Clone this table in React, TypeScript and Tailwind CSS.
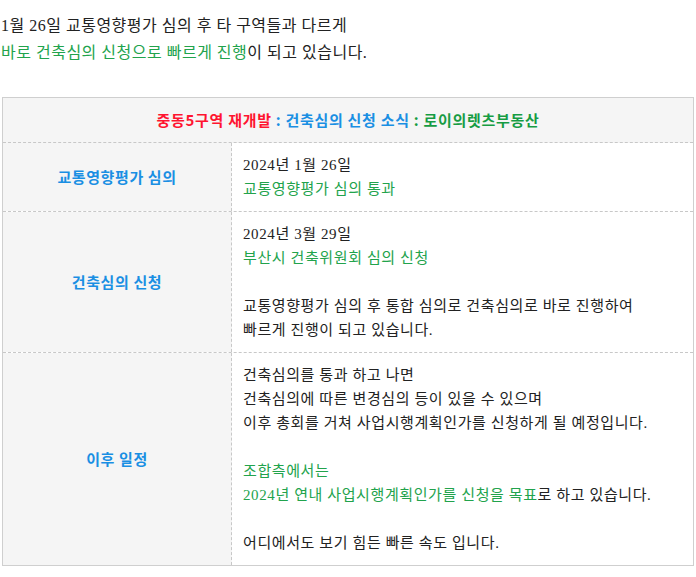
import React from "react";

const body = "font-['Liberation_Serif','Noto_Sans_CJK_KR',serif]";
const sans = "font-['Noto_Sans_CJK_KR','Noto_Sans',sans-serif]";

const rows = [
  {
    label: "교통영향평가 심의",
    lines: [
      { text: "2024년 1월 26일" },
      { text: "교통영향평가 심의 통과", green: true },
    ],
  },
  {
    label: "건축심의 신청",
    lines: [
      { text: "2024년 3월 29일" },
      { text: "부산시 건축위원회 심의 신청", green: true },
      { text: "" },
      { text: "교통영향평가 심의 후 통합 심의로 건축심의로 바로 진행하여" },
      { text: "빠르게 진행이 되고 있습니다." },
    ],
  },
];

function Line({ text, green }: { text: string; green?: boolean }) {
  return (
    <div className={`h-6 whitespace-nowrap ${green ? "text-[#22a34c]" : "text-[#222]"}`}>{text}</div>
  );
}

export default function App() {
  return (
    <div className={`bg-white w-[696px] min-h-[577px] pt-3 ${body}`}>
      {/* 소개 문구 */}
      <div className="leading-[27px] text-[16px] tracking-[0.5px] text-[#222] pl-px">
        <p>1월 26일 교통영향평가 심의 후 타 구역들과 다르게</p>
        <p>
          <span className="text-[#22a34c]">바로 건축심의 신청으로 빠르게 진행</span>이 되고 있습니다.
        </p>
      </div>

      {/* 표 */}
      <div className="mt-[31px] mx-[2px] border border-[#cfcfcf] text-[15px] tracking-[0.6px]">
        <div
          className={`h-[45px] flex items-center justify-center bg-[#f5f5f5] border-b border-dashed border-[#c8c8c8] font-bold tracking-[0.7px] ${sans}`}
        >
          <span className="text-[#ff1430]">중동5구역 재개발</span>
          <span className="text-[#1a8fe3]">&nbsp;: 건축심의 신청 소식&nbsp;</span>
          <span className="text-[#169c43]">: 로이의렛츠부동산</span>
        </div>

        {rows.map((r) => (
          <div key={r.label} className="grid grid-cols-[229px_1fr] border-b border-dashed border-[#c8c8c8]">
            <div
              className={`bg-[#f5f5f5] border-r border-dashed border-[#c8c8c8] flex items-center justify-center font-bold text-[#1a8fe3] ${sans}`}
            >
              {r.label}
            </div>
            <div className="py-[10px] pl-[11px] leading-6">
              {r.lines.map((l, i) => (
                <Line key={i} text={l.text} green={l.green} />
              ))}
            </div>
          </div>
        ))}

        <div className="grid grid-cols-[229px_1fr]">
          <div
            className={`bg-[#f5f5f5] border-r border-dashed border-[#c8c8c8] flex items-center justify-center font-bold text-[#1a8fe3] ${sans}`}
          >
            이후 일정
          </div>
          <div className="py-[10px] pl-[11px] leading-6">
            <Line text="건축심의를 통과 하고 나면" />
            <Line text="건축심의에 따른 변경심의 등이 있을 수 있으며" />
            <Line text="이후 총회를 거쳐 사업시행계획인가를 신청하게 될 예정입니다." />
            <Line text="" />
            <Line text="조합측에서는" green />
            <div className="h-6 whitespace-nowrap text-[#222]">
              <span className="text-[#22a34c]">2024년 연내 사업시행계획인가를 신청을 목표</span>로 하고 있습니다.
            </div>
            <Line text="" />
            <Line text="어디에서도 보기 힘든 빠른 속도 입니다." />
          </div>
        </div>
      </div>
    </div>
  );
}
